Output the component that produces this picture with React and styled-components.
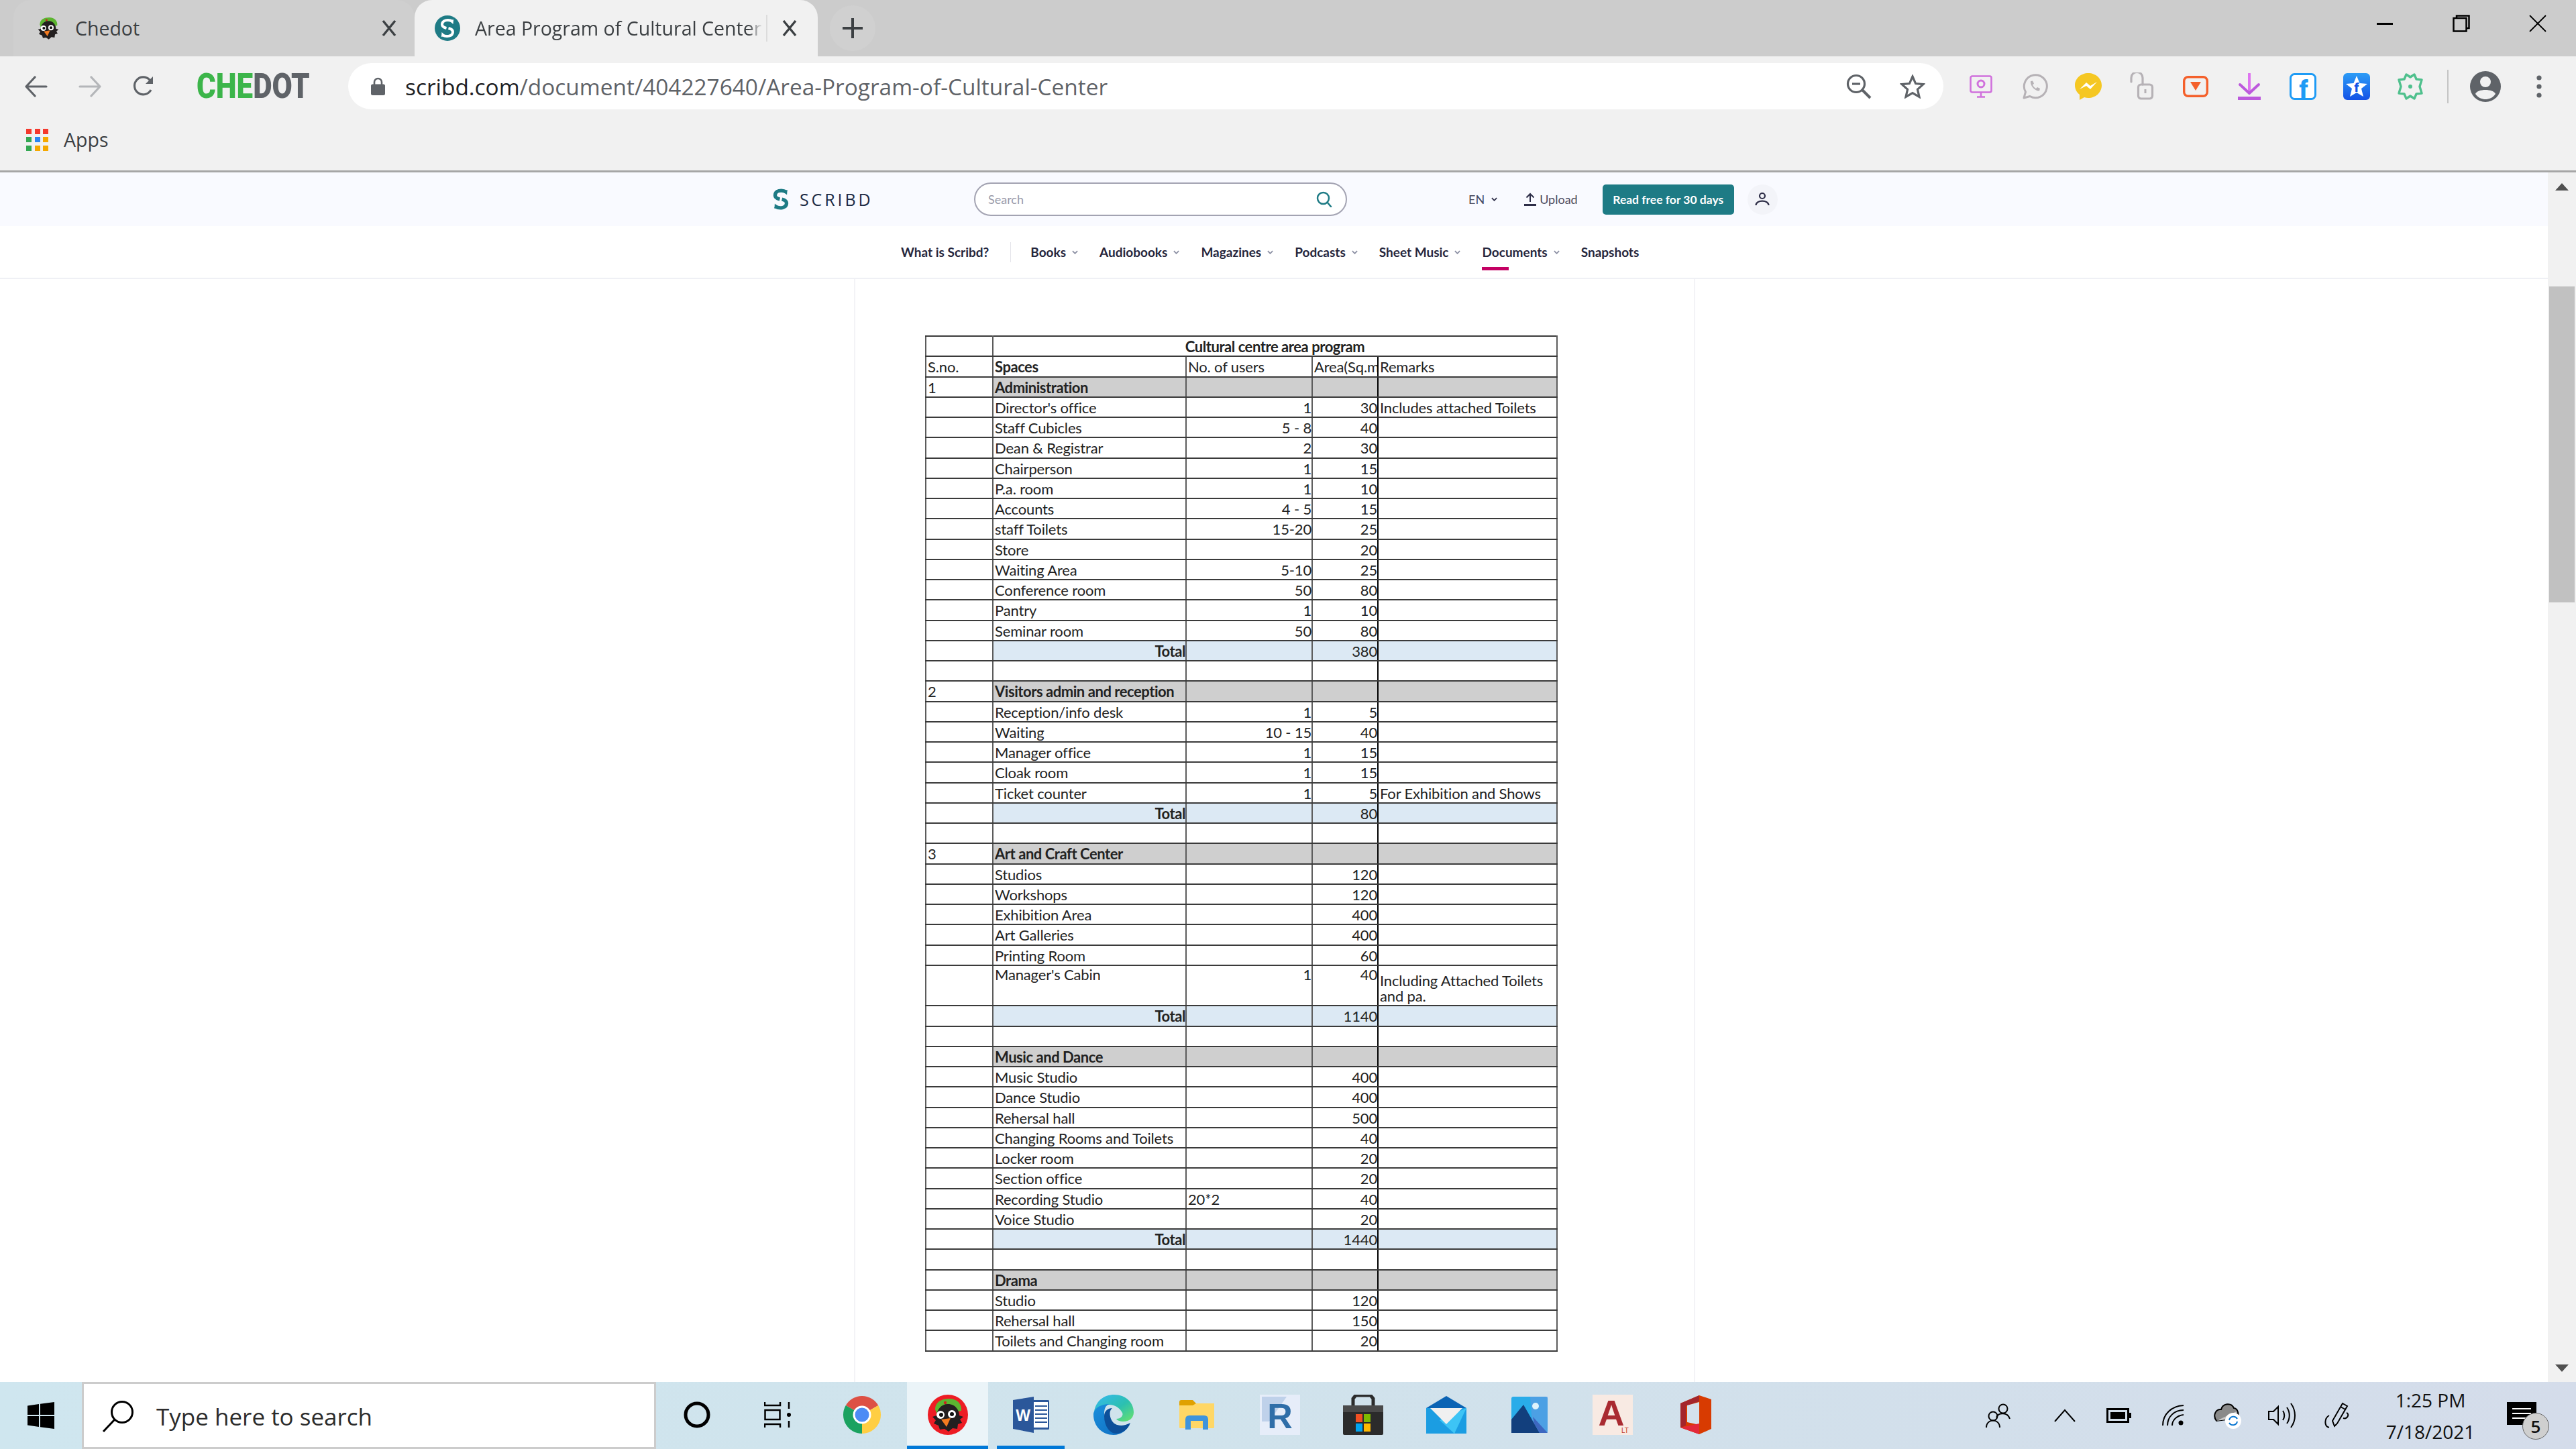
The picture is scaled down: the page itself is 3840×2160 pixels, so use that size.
import React from 'react';
import styled, { createGlobalStyle } from 'styled-components';

const GlobalStyle = createGlobalStyle`
  html, body {
    margin: 0;
    width: 3840px;
    height: 2160px;
    overflow: hidden;
    background: #fff;
  }
  * { box-sizing: border-box; }
`;

const UI_FONT = '"Open Sans", "Liberation Sans", sans-serif';
const SHEET_FONT = 'Lato, "Liberation Sans", sans-serif';

const Screen = styled.div`
  width: 3840px;
  height: 2160px;
  display: flex;
  flex-direction: column;
  font-family: ${UI_FONT};
`;

/* browser chrome */
const TabStrip = styled.div`
  height: 84px;
  flex: none;
  display: flex;
  align-items: stretch;
  padding-left: 20px;
  background: #cccccc;
`;

const Tab = styled.div`
  width: ${({ $active }) => ($active ? '601px' : '598px')};
  display: flex;
  align-items: center;
  gap: ${({ $active }) => ($active ? '22px' : '20px')};
  padding: 0 ${({ $active }) => ($active ? '31px' : '27px')} 0 ${({ $active }) => ($active ? '30px' : '32px')};
  border-radius: 26px 26px 0 0;
  background: ${({ $active }) => ($active ? '#f1f1f1' : '#cfcfcf')};
  color: #3c4043;
  font-size: 28.5px;
`;

const TabTitle = styled.span`
  flex: 1;
  overflow: hidden;
  white-space: nowrap;
`;

const FadedTitle = styled(TabTitle)`
  -webkit-mask-image: linear-gradient(90deg, #000 95%, transparent 100%);
`;

const TabSplit = styled.div`
  width: 2px;
  height: 40px;
  margin: 0 0 0 -17px;
  flex: none;
  background: #dcdcdc;
`;

const NewTab = styled.div`
  width: 68px;
  height: 68px;
  margin: 8px 0 0 18px;
  border-radius: 50%;
  background: #d0d0d0;
  display: flex;
  align-items: center;
  justify-content: center;
`;

const WindowControls = styled.div`
  margin-left: auto;
  display: flex;
`;

const WindowButton = styled.div`
  width: 114px;
  height: 70px;
  display: flex;
  align-items: center;
  justify-content: center;
`;

const Toolbar = styled.div`
  height: 89px;
  flex: none;
  display: flex;
  align-items: center;
  padding-left: 14px;
  background: #f1f1f1;
`;

const ToolButton = styled.div`
  width: 80px;
  height: 60px;
  flex: none;
  display: flex;
  align-items: center;
  justify-content: center;
`;

const BrandMark = styled.div`
  width: 164px;
  margin: 0 62px 0 39px;
  flex: none;
  font-family: Roboto, "Liberation Sans", sans-serif;
  font-weight: 900;
  font-size: 51px;
  line-height: 60px;
  white-space: nowrap;
  transform: scaleX(0.86);
  transform-origin: left center;
  color: #5f6368;
  span { color: #3cb54a; }
`;

const AddressBar = styled.div`
  width: 2378px;
  height: 69px;
  flex: none;
  display: flex;
  align-items: center;
  padding: 0 6px 0 34px;
  border-radius: 35px;
  background: #fff;
  font-size: 33.4px;
  color: #5f6368;
  margin-right: 16px;
`;

const Url = styled.div`
  flex: 1;
  margin-left: 30px;
  white-space: nowrap;
  b { font-weight: 400; color: #202124; }
`;

const Divider = styled.div`
  width: 2px;
  height: 50px;
  margin: 0 15px;
  flex: none;
  background: #c4c4c4;
`;

const Bookmarks = styled.div`
  height: 81px;
  flex: none;
  display: flex;
  align-items: center;
  gap: 23px;
  padding: 0 0 11px 39px;
  background: #f1f1f1;
  color: #3c4043;
  font-size: 28.5px;
`;

const AppsGrid = styled.div`
  width: 33px;
  display: grid;
  grid-template-columns: repeat(3, 8px);
  grid-auto-rows: 8px;
  gap: 4.5px;
`;

const AppsDot = styled.i`
  background: ${({ $c }) => $c};
`;

const ChromeEdge = styled.div`
  height: 3px;
  flex: none;
  background: #a6a6a6;
`;

/* page */
const Viewport = styled.div`
  flex: 1;
  min-height: 0;
  display: flex;
`;

const Page = styled.div`
  flex: 1;
  min-width: 0;
  display: flex;
  flex-direction: column;
  background: #fff;
`;

const SiteHeader = styled.header`
  height: 80px;
  flex: none;
  display: flex;
  align-items: center;
  padding-left: 1151px;
  background: #f9faff;
`;

const SiteLogo = styled.div`
  width: 301px;
  display: flex;
  align-items: center;
  gap: 15px;
  font-family: "Open Sans", sans-serif;
  font-size: 25px;
  letter-spacing: 3.9px;
  color: #1c2a44;
`;

const SearchBox = styled.div`
  width: 556px;
  height: 50px;
  display: flex;
  align-items: center;
  justify-content: space-between;
  padding: 0 20px 0 19px;
  border: 2px solid #a3a3b2;
  border-radius: 25px;
  background: #fff;
  font-family: ${SHEET_FONT};
  font-size: 18px;
  color: #9a9aa8;
`;

const HeaderText = styled.div`
  display: flex;
  align-items: center;
  gap: ${({ $gap }) => $gap}px;
  margin-left: ${({ $ml }) => $ml}px;
  font-family: ${SHEET_FONT};
  font-size: 18px;
  color: #4b4b60;
`;

const ReadButton = styled.div`
  width: 196px;
  height: 45px;
  margin-left: 37px;
  display: flex;
  align-items: center;
  justify-content: center;
  border-radius: 5px;
  background: #1e7b85;
  color: #fff;
  font-family: ${SHEET_FONT};
  font-weight: 700;
  font-size: 17.5px;
  white-space: nowrap;
`;

const PersonCircle = styled.div`
  width: 45px;
  height: 45px;
  margin-left: 20px;
  display: flex;
  align-items: center;
  justify-content: center;
  border-radius: 50%;
  background: #f3f4f9;
`;

const SiteNav = styled.nav`
  height: 79px;
  flex: none;
  display: flex;
  align-items: center;
  padding: 0 0 0 1343px;
  border-bottom: 2px solid #eff0f5;
  font-family: ${SHEET_FONT};
  font-size: 19px;
  line-height: 23px;
  font-weight: 700;
  color: #26263c;
`;

const NavItem = styled.div`
  position: relative;
  display: flex;
  align-items: center;
  gap: 9px;
  margin-right: 32px;
  white-space: nowrap;
  ${({ $active }) => $active && `
    &::after {
      content: '';
      position: absolute;
      left: 0;
      top: 34px;
      width: 40px;
      height: 5px;
      background: #c40063;
    }
  `}
`;

const NavSplit = styled.div`
  width: 1px;
  height: 30px;
  margin-right: 29px;
  background: #e3e3ea;
`;

const DocArea = styled.main`
  flex: 1;
  min-height: 0;
  display: flex;
  justify-content: center;
  padding-left: 2px;
`;

const DocPage = styled.div`
  width: 1254px;
  padding: 84px 0 0 104px;
  border-left: 2px solid #f3f3f6;
  border-right: 2px solid #f3f3f6;
  overflow: hidden;
`;

const Sheet = styled.table`
  width: 941px;
  table-layout: fixed;
  border-collapse: collapse;
  font-family: ${SHEET_FONT};
  font-size: 22px;
  letter-spacing: -0.16px;
  color: #222;
`;

const Row = styled.tr`
  height: ${({ $tall }) => ($tall ? '60.5px' : '30.25px')};
`;

const rowFill = { section: '#cfcfcf', total: '#dce9f4' };

const Cell = styled.td`
  padding: 1px ${({ $align }) => ($align === 'right' ? 0 : 2)}px 0 2px;
  overflow: hidden;
  white-space: nowrap;
  line-height: 23px;
  border: solid #3a3a3a;
  border-width: 2.5px 2px;
  border-left-color: #5c5c5c;
  border-right-color: #5c5c5c;
  vertical-align: ${({ $valign }) => $valign || 'middle'};
  text-align: ${({ $align }) => $align || 'left'};
  background: ${({ $fill }) => rowFill[$fill] || '#fff'};
  ${({ $bold }) => $bold && 'font-weight: 700; letter-spacing: -0.45px;'}
  ${({ $wrap }) => $wrap && 'white-space: normal; padding-bottom: 2px;'}
  ${({ $strong }) => $strong && 'border-left-color: #000;'}
  ${({ $strongRight }) => $strongRight && 'border-right-color: #000;'}
`;

/* scrollbar */
const ScrollTrack = styled.div`
  width: 42px;
  flex: none;
  display: flex;
  flex-direction: column;
  align-items: center;
  background: #f1f1f1;
`;

const ScrollArrow = styled.div`
  width: 0;
  height: 0;
  border-left: 10px solid transparent;
  border-right: 10px solid transparent;
  ${({ $down }) => ($down
    ? 'border-top: 11px solid #505050; margin-top: auto; margin-bottom: 15px;'
    : 'border-bottom: 11px solid #505050; margin-top: 16px;')}
`;

const ScrollThumb = styled.div`
  width: 38px;
  height: 471px;
  margin-top: 143px;
  background: #c1c1c1;
`;

/* taskbar */
const Taskbar = styled.footer`
  height: 100px;
  flex: none;
  display: flex;
  align-items: center;
  background: linear-gradient(90deg, #cfe6ef 0%, #d0e3ec 45%, #d4dcea 100%);
`;

const StartButton = styled.div`
  width: 122px;
  height: 100%;
  display: flex;
  align-items: center;
  justify-content: center;
`;

const TaskSearch = styled.div`
  width: 856px;
  height: 100%;
  display: flex;
  align-items: center;
  gap: 33px;
  padding: 2px 0 0 27px;
  border: 3px solid #cccccc;
  background: #fff;
  color: #2c2c2c;
  font-size: 35px;
`;

const TaskIcon = styled.div`
  position: relative;
  width: ${({ $w }) => $w || 124}px;
  height: 100%;
  flex: none;
  display: flex;
  align-items: center;
  justify-content: center;
  padding-bottom: 2px;
  margin: 0 ${({ $mr }) => $mr || 0}px 0 ${({ $ml }) => $ml || 0}px;
  background: ${({ $open }) => ($open ? '#ebf4f8' : 'transparent')};
  ${({ $bar }) => $bar && `
    &::after {
      content: '';
      position: absolute;
      left: 0;
      right: 0;
      bottom: 0;
      height: 5px;
      background: #0078d7;
    }
  `}
`;

const Tray = styled.div`
  margin-left: auto;
  height: 100%;
  display: flex;
  align-items: center;
`;

const TrayItem = styled.div`
  width: 81px;
  margin-right: ${({ $mr }) => $mr || 0}px;
  display: flex;
  align-items: center;
  justify-content: center;
`;

const Clock = styled.div`
  width: 188px;
  margin: 2px 0 0 6px;
  text-align: center;
  font-size: 28px;
  line-height: 47px;
  color: #111;
`;

const Notify = styled.div`
  position: relative;
  width: 44px;
  height: 34px;
  margin: -6px 59px 0 20px;
  background: #000;
  display: flex;
  flex-direction: column;
  justify-content: center;
  gap: 5px;
  padding: 0 8px;
  i { height: 2px; background: #fff; display: block; }
`;

const NotifyBadge = styled.div`
  position: absolute;
  right: -19px;
  top: 16px;
  width: 40px;
  height: 40px;
  border-radius: 50%;
  border: 1.5px solid #666;
  background: #cfcfcf;
  display: flex;
  align-items: center;
  justify-content: center;
  font-size: 26px;
  font-weight: 600;
  color: #111;
`;

/* drawings */
const ChedotBird = ({ size, ring }) => (
  <svg width={size} height={size} viewBox="0 0 60 60">
    {ring && <circle cx="30" cy="30" r="30" fill="#ed1c24" />}
    <path d="M11 22 C11 10 22 6 32 6 C44 6 51 14 50 24 L34 27 L14 30 Z" fill="#5cb531" />
    <circle cx="26" cy="12" r="2.2" fill="#d02020" />
    <path d="M30 14 C42 14 47 24 47 31 L53 33 L48 37 L51 42 L45 44 L44 51 L37 50 L31 55 L25 51 L18 52 L16 46 L9 43 L12 38 L7 33 L13 31 C14 22 20 14 30 14 Z" fill="#231f20" />
    <circle cx="19" cy="30" r="6" fill="#fff" />
    <circle cx="36" cy="29" r="6" fill="#fff" />
    <circle cx="20" cy="30" r="3" fill="#111" />
    <circle cx="36" cy="29" r="3" fill="#111" />
    <path d="M20 37 L34 35 L28 48 Z" fill="#f47b20" />
  </svg>
);

const ScribdStrokes = ({ color, sw }) => (
  <g fill="none" stroke={color} strokeWidth={sw} strokeLinecap="butt">
    <path d="M20 5 C13 1 4 3 4 9.5 C4 12.5 6.5 14 10.5 15" />
    <path d="M13.5 15 C17.5 16 20 17.5 20 20.5 C20 27 11 29 4 25" />
    <path d="M15 4 L21 2 L20.5 9" fill={color} stroke="none" />
    <path d="M9 26 L3 28 L3.5 21" fill={color} stroke="none" />
  </g>
);

const ScribdMark = () => (
  <svg width="26" height="32" viewBox="0 0 24 30"><ScribdStrokes color="#1e7b85" sw={5} /></svg>
);

const ScribdRound = () => (
  <svg width="38" height="38" viewBox="0 0 38 38">
    <circle cx="19" cy="19" r="19" fill="#1e7b85" />
    <g transform="translate(7 4)"><ScribdStrokes color="#fff" sw={4} /></g>
  </svg>
);

const CloseX = () => (
  <svg width="22" height="26" viewBox="0 0 22 26" stroke="#3c4043" strokeWidth="3.4">
    <path d="M2 2 L20 24 M20 2 L2 24" />
  </svg>
);

const Plus = () => (
  <svg width="34" height="34" viewBox="0 0 34 34" stroke="#3c4043" strokeWidth="4"><path d="M17 2 V32 M2 17 H32" /></svg>
);

const Arrow = ({ flip, color }) => (
  <svg width="34" height="32" viewBox="0 0 34 32" fill="none" stroke={color} strokeWidth="3.2" strokeLinecap="round" strokeLinejoin="round">
    <g transform={flip ? 'translate(34 0) scale(-1 1)' : undefined}>
      <path d="M32 16 H3 M15 2 L2 16 L15 30" />
    </g>
  </svg>
);

const Reload = () => (
  <svg width="34" height="34" viewBox="0 0 34 34" fill="none" stroke="#5f6368" strokeWidth="3.2">
    <path d="M28 22 A13 13 0 1 1 26 7 L30 11" />
    <path d="M31 2 L31 13 L20 13 Z" fill="#5f6368" stroke="none" />
  </svg>
);

const Lock = () => (
  <svg width="21" height="27" viewBox="0 0 21 27">
    <path d="M5 12 V7.5 a5.5 5.5 0 0 1 11 0 V12" fill="none" stroke="#5f6368" strokeWidth="2.6" />
    <rect x="0" y="10.5" width="21" height="16.5" rx="2.5" fill="#5f6368" />
  </svg>
);

const ZoomOut = () => (
  <svg width="38" height="38" viewBox="0 0 38 38" fill="none" stroke="#5f6368" strokeWidth="3.2">
    <circle cx="15" cy="15" r="12.5" />
    <path d="M24 24 L36 36" strokeWidth="4" />
    <path d="M9 15 H21" />
  </svg>
);

const Star = () => (
  <svg width="38" height="36" viewBox="0 0 38 36" fill="none" stroke="#5f6368" strokeWidth="3.2">
    <path d="M19 3 L23.6 13.6 L35 14.6 L26.4 22.2 L29 33.4 L19 27.5 L9 33.4 L11.6 22.2 L3 14.6 L14.4 13.6 Z" />
  </svg>
);

const ExtScreen = () => (
  <svg width="34" height="34" viewBox="0 0 34 34" fill="none" stroke="#d071dc" strokeWidth="2.6">
    <rect x="1.5" y="1.5" width="31" height="24" rx="2.5" />
    <circle cx="17" cy="13" r="5" strokeWidth="3" />
    <path d="M17 26 V32 M11 32.5 H23" />
  </svg>
);

const ExtWhatsapp = () => (
  <svg width="40" height="40" viewBox="0 0 40 40" fill="none" stroke="#b6b2b6" strokeWidth="3">
    <path d="M4 37 L6.5 28 A17 17 0 1 1 13 34.5 Z" strokeLinejoin="round" />
    <path d="M14 12 C13 18 20 27 27 26.5 L28 23 L24 21 L22 23 C20 22 18 20 17 17.5 L19 15.5 L17 11.5 Z" fill="#b6b2b6" stroke="none" />
  </svg>
);

const ExtMessenger = () => (
  <svg width="40" height="40" viewBox="0 0 40 40">
    <path d="M20 0 C9 0 0 8 0 18 C0 24 3 29 7 32 V40 L14 36 C16 36.5 18 37 20 37 C31 37 40 29 40 18 C40 8 31 0 20 0 Z" fill="#f5c722" />
    <path d="M7 24 L17 14 L23 19 L33 13 L23 24 L17 19 Z" fill="#fff" />
  </svg>
);

const ExtLock = () => (
  <svg width="36" height="42" viewBox="0 0 36 42" fill="none" stroke="#b6b2b6" strokeWidth="3.2">
    <path d="M2 14 V8 a8.5 8.5 0 0 1 17 0 V18" strokeLinecap="round" />
    <rect x="12.5" y="18" width="21" height="21" rx="4" />
    <path d="M23 25 V31" strokeWidth="3" />
  </svg>
);

const ExtVideo = () => (
  <svg width="38" height="32" viewBox="0 0 38 32" fill="none">
    <rect x="1.7" y="1.7" width="34.6" height="28.6" rx="6" stroke="#f4602b" strokeWidth="3.4" />
    <path d="M11 9 H27 L19 22 Z" fill="#f4602b" />
  </svg>
);

const ExtDownload = () => (
  <svg width="36" height="40" viewBox="0 0 36 40" fill="none" strokeWidth="4" strokeLinecap="round">
    <path d="M18 1 V28" stroke="#de74f0" />
    <path d="M4 17 L18 30 L32 17" stroke="#bc59dc" strokeLinejoin="round" />
    <rect x="1" y="35" width="34" height="5" fill="#bc59dc" stroke="none" />
  </svg>
);

const ExtFacebook = () => (
  <svg width="40" height="40" viewBox="0 0 40 40">
    <rect x="1.5" y="1.5" width="37" height="37" rx="6" fill="#fff" stroke="#1e9bf5" strokeWidth="3" />
    <text x="21" y="37" textAnchor="middle" fontFamily="Roboto, sans-serif" fontWeight="900" fontSize="36" fill="#1e9bf5">f</text>
  </svg>
);

const ExtFbStar = () => (
  <svg width="40" height="40" viewBox="0 0 40 40">
    <defs>
      <linearGradient id="fbstar" x1="0" y1="0" x2="0" y2="1">
        <stop offset="0" stopColor="#2c9cf6" />
        <stop offset="1" stopColor="#1452e6" />
      </linearGradient>
    </defs>
    <rect width="40" height="40" rx="6" fill="url(#fbstar)" />
    <path d="M20 4 L24.5 15 L36 16 L27 23 L30 35 L20 29 L10 35 L13 23 L4 16 L15.5 15 Z" fill="#fff" />
    <text x="20" y="28" textAnchor="middle" fontFamily="Roboto, sans-serif" fontWeight="900" fontSize="19" fill="#1452e6">f</text>
  </svg>
);

const ExtGear = () => (
  <svg width="40" height="40" viewBox="0 0 40 40" fill="none" stroke="#4fc08d" strokeWidth="3.4" strokeLinejoin="round">
    <path d="M14 2 L20 6 L26 2 L29 9 L37 10 L34 20 L37 30 L29 31 L26 38 L20 34 L14 38 L11 31 L3 30 L6 20 L3 10 L11 9 Z" />
    <circle cx="20" cy="20" r="3" fill="#4fc08d" stroke="none" />
  </svg>
);

const Avatar = () => (
  <svg width="46" height="46" viewBox="0 0 46 46">
    <circle cx="23" cy="23" r="23" fill="#5f6368" />
    <circle cx="23" cy="16" r="8" fill="#f1f1f1" />
    <path d="M8 34 C11 26 35 26 38 34 C34 40 28 42 23 42 C18 42 12 40 8 34 Z" fill="#f1f1f1" />
  </svg>
);

const KebabDots = () => (
  <svg width="8" height="34" viewBox="0 0 8 34" fill="#5f6368">
    <circle cx="4" cy="4" r="3.6" /><circle cx="4" cy="17" r="3.6" /><circle cx="4" cy="30" r="3.6" />
  </svg>
);

const SearchGlass = () => (
  <svg width="24" height="24" viewBox="0 0 24 24" fill="none" stroke="#1e7b85" strokeWidth="2.5">
    <circle cx="10.5" cy="10.5" r="8.5" />
    <path d="M16.5 16.5 L22 23" strokeLinecap="round" />
  </svg>
);

const TinyCaret = ({ color = '#8b8fa3' }) => (
  <svg width="9" height="6" viewBox="0 0 10 6" fill="none" stroke={color} strokeWidth="2">
    <path d="M1 1 L5 5 L9 1" />
  </svg>
);

const UploadIcon = () => (
  <svg width="18" height="20" viewBox="0 0 18 20" fill="none" stroke="#2e2e48" strokeWidth="2">
    <path d="M9 14 V2 M3.5 7.5 L9 2 L14.5 7.5" />
    <path d="M0 18.5 H18" strokeWidth="3" />
  </svg>
);

const PersonIcon = () => (
  <svg width="22" height="22" viewBox="0 0 22 22" fill="none" stroke="#2e2e48" strokeWidth="2.2">
    <circle cx="11" cy="6" r="4" />
    <path d="M1.5 20 C1.5 11.5 20.5 11.5 20.5 20" />
  </svg>
);

const WinLogo = () => (
  <svg width="40" height="40" viewBox="0 0 40 40" fill="#000">
    <path d="M0 5.5 L17 3 V19 H0 Z M19 2.7 L40 0 V19 H19 Z M0 21 H17 V37 L0 34.5 Z M19 21 H40 V40 L19 37.3 Z" />
  </svg>
);

const TaskSearchGlass = () => (
  <svg width="48" height="48" viewBox="0 0 48 48" fill="none" stroke="#000" strokeWidth="3">
    <circle cx="30" cy="18" r="15.5" />
    <path d="M19 29 L2 47" />
  </svg>
);

const Cortana = () => (
  <svg width="40" height="40" viewBox="0 0 40 40" fill="none">
    <circle cx="20" cy="20" r="17" stroke="#000" strokeWidth="5" />
  </svg>
);

const TaskView = () => (
  <svg width="40" height="40" viewBox="0 0 40 40" fill="none" stroke="#000" strokeWidth="2.5">
    <path d="M1 1 V6 H24 V1 M1 39 V34 H24 V39" />
    <rect x="1.5" y="13" width="22" height="14" />
    <path d="M37 1 V11 M37 29 V39" />
    <circle cx="37" cy="20" r="3" fill="#000" stroke="none" />
  </svg>
);

const ChromeIcon = () => (
  <svg width="56" height="56" viewBox="0 0 56 56">
    <path d="M28 28 L52.25 14 A28 28 0 0 0 3.75 14 Z" fill="#dd5044" />
    <path d="M28 28 L3.75 14 A28 28 0 0 0 28 56 Z" fill="#1aa260" />
    <path d="M28 28 L28 56 A28 28 0 0 0 52.25 14 Z" fill="#ffce43" />
    <circle cx="28" cy="28" r="13.5" fill="#fff" />
    <circle cx="28" cy="28" r="10.5" fill="#4c8bf5" />
  </svg>
);

const WordIcon = () => (
  <svg width="54" height="54" viewBox="0 0 54 54">
    <rect x="24" y="5" width="30" height="44" rx="1.5" fill="#2b579a" />
    <rect x="31" y="8" width="21" height="38" fill="#fff" />
    <path d="M33 14 H51 M33 20 H51 M33 26 H51 M33 32 H51 M33 38 H51" stroke="#2b579a" strokeWidth="2.2" />
    <path d="M0 5 L31 0 V54 L0 48 Z" fill="#2b579a" />
    <text x="15" y="36" textAnchor="middle" fontFamily='"Liberation Sans", sans-serif' fontWeight="700" fontSize="23" fill="#fff">W</text>
  </svg>
);

const EdgeIcon = () => (
  <svg width="60" height="60" viewBox="0 0 60 60">
    <defs>
      <linearGradient id="edgeTop" x1="0" y1="0" x2="1" y2="1">
        <stop offset="0" stopColor="#35b8f1" />
        <stop offset="0.55" stopColor="#2cc0b0" />
        <stop offset="1" stopColor="#6be36a" />
      </linearGradient>
      <linearGradient id="edgeLow" x1="0" y1="0" x2="1" y2="1">
        <stop offset="0" stopColor="#1a8fdc" />
        <stop offset="1" stopColor="#0f6cc0" />
      </linearGradient>
    </defs>
    <path d="M1 26 C3 10 15 0 31 0 C48 0 60 12 60 26 C60 35 53 40 45 40 C39 40 35 38 34 36 C41 36 45 31 43 27 C39 19 31 15 24 15 C12 15 3 20 1 26 Z" fill="url(#edgeTop)" />
    <path d="M0 30 C0 21 10 14 24 14 C14 17 16 30 17 36 C19 48 30 54 40 52 C47 51 53 47 55 42 C51 53 41 60 30 60 C13 60 0 47 0 30 Z" fill="url(#edgeLow)" />
    <path d="M16 32 C16 24 22 20 28 20 C23 24 24 32 27 38 C31 46 42 49 55 42 C51 53 41 58 34 58 C24 58 16 46 16 32 Z" fill="#0c4f9a" />
  </svg>
);

const FolderIcon = () => (
  <svg width="52" height="44" viewBox="0 0 52 44">
    <path d="M0 3 Q0 0 3 0 H20 L25 5 H52 V12 H0 Z" fill="#e0a100" />
    <path d="M0 8 H20 L25 5 H52 V41 Q52 42 50 42 H2 Q0 42 0 41 Z" fill="#ffd766" />
    <path d="M9 44 V29 Q9 23 15 23 H37 Q43 23 43 29 V44 H35 V31 H17 V44 Z" fill="#3e94dc" />
  </svg>
);

const RevitIcon = () => (
  <svg width="60" height="60" viewBox="0 0 60 60">
    <rect width="60" height="60" fill="#e6edf9" />
    <path d="M3 3 H40 L14 40 H3 Z" fill="#bfd1ea" />
    <text x="30" y="50" textAnchor="middle" fontFamily='"Liberation Sans", sans-serif' fontWeight="700" fontSize="52" fill="#2f6ea8">R</text>
  </svg>
);

const StoreIcon = () => (
  <svg width="60" height="60" viewBox="0 0 60 60">
    <path d="M15 20 V6 L19 1 H41 L45 6 V20" fill="none" stroke="#2c2c2c" strokeWidth="5" />
    <path d="M0 16 H60 V58 Q60 60 58 60 H2 Q0 60 0 58 Z" fill="#2b2b2b" />
    <rect x="0" y="16" width="60" height="10" fill="#4a4a4a" />
    <rect x="19" y="29" width="10" height="12" fill="#f25022" />
    <rect x="31" y="29" width="10" height="12" fill="#7fba00" />
    <rect x="19" y="43" width="10" height="12" fill="#00a4ef" />
    <rect x="31" y="43" width="10" height="12" fill="#ffb900" />
  </svg>
);

const MailIcon = () => (
  <svg width="60" height="56" viewBox="0 0 60 56">
    <path d="M0 18 L30 0 L60 18 Z" fill="#0a63b4" />
    <path d="M0 18 H60 V56 H0 Z" fill="#1b9de2" />
    <path d="M60 18 L42 56 L20 36 Z" fill="#3dc4f5" />
    <path d="M6 18 H54 L30 42 Z" fill="#f0f0f0" />
  </svg>
);

const PhotosIcon = () => (
  <svg width="54" height="54" viewBox="0 0 54 54">
    <rect width="54" height="54" rx="3" fill="#29ace9" />
    <path d="M28 0 H54 V54 H32 Z" fill="#6f93e0" opacity="0.5" />
    <circle cx="36" cy="14" r="5" fill="#dff2fb" />
    <path d="M0 34 L18 12 L42 54 H0 Z" fill="#123f7d" />
    <path d="M32 30 L54 54 H42 L34 40 Z" fill="#3d67c0" />
  </svg>
);

const AcadIcon = () => (
  <svg width="60" height="60" viewBox="0 0 60 60">
    <rect width="60" height="60" fill="#f8eae3" />
    <text x="28" y="46" textAnchor="middle" fontFamily='"Liberation Sans", sans-serif' fontWeight="700" fontSize="54" fill="#a92a31">A</text>
    <text x="43" y="57" fontFamily='"Liberation Sans", sans-serif' fontSize="10" fill="#c0392b">LT</text>
  </svg>
);

const OfficeIcon = () => (
  <svg width="46" height="58" viewBox="0 0 46 58" fill="none">
    <path d="M28 0 L46 6 V50 L28 58 L0 48 V12 Z" fill="#d83b01" />
    <path d="M28 0 L0 12 V48 L8 45 V16 L28 9 Z" fill="#a4262c" />
    <path d="M10 15 L28 10 V44 L10 40 Z" fill="#d4e1ec" />
    <path d="M0 48 L28 42 V58 Z" fill="#e3293a" />
  </svg>
);

const PeopleIcon = () => (
  <svg width="38" height="38" viewBox="0 0 38 38" fill="none" stroke="#000" strokeWidth="2">
    <circle cx="26" cy="9" r="6.5" />
    <path d="M16 22 C19 14 33 14 36 24" />
    <circle cx="11" cy="20" r="6.5" />
    <path d="M1 37 C1 23 21 23 21 37" />
  </svg>
);

const TrayCaret = () => (
  <svg width="32" height="20" viewBox="0 0 32 20" fill="none" stroke="#000" strokeWidth="2"><path d="M1 19 L16 2 L31 19" /></svg>
);

const Battery = () => (
  <svg width="38" height="22" viewBox="0 0 38 22">
    <rect x="1.5" y="1.5" width="31" height="19" fill="none" stroke="#000" strokeWidth="3" />
    <rect x="6" y="6" width="22" height="10" fill="#000" />
    <rect x="34" y="7" width="3" height="8" fill="#000" />
  </svg>
);

const Wifi = () => (
  <svg width="34" height="32" viewBox="0 0 34 32" fill="none" stroke="#000" strokeWidth="2">
    <path d="M1 31 C1 14 14 2 32 1" />
    <path d="M8 31 C8 18 18 8 32 8" />
    <path d="M15 31 C15 23 22 16 32 15" />
    <circle cx="28" cy="27" r="3.5" fill="#000" stroke="none" />
  </svg>
);

const OneDriveSync = () => (
  <svg width="42" height="40" viewBox="0 0 42 40">
    <path d="M4 28 C-2 20 3 10 11 11 C13 2 26 0 30 9 C37 10 38 20 34 24 Z" fill="#8a8a8a" stroke="#000" strokeWidth="2" />
    <path d="M4 28 L34 14 L34 24 Z" fill="#c9c9c9" />
    <circle cx="29" cy="28" r="12" fill="#fff" />
    <path d="M23 27 A6.5 6.5 0 0 1 35 25 M35 29 A6.5 6.5 0 0 1 23 31" fill="none" stroke="#0d78d1" strokeWidth="2" />
  </svg>
);

const Volume = () => (
  <svg width="42" height="38" viewBox="0 0 42 38" fill="none" stroke="#000" strokeWidth="2">
    <path d="M1 13 H8 L15 6 V32 L8 25 H1 Z" />
    <path d="M22 12 C25 16 25 22 22 26" />
    <path d="M28 7 C33 14 33 24 28 31" />
    <path d="M34 1 C42 12 42 26 34 37" />
  </svg>
);

const PenIcon = () => (
  <svg width="40" height="40" viewBox="0 0 40 40" fill="none" stroke="#000" strokeWidth="2">
    <path d="M17 36 L14 28 L29 2 L36 6 L21 32 Z" />
    <path d="M26 7 L33 11" />
    <path d="M9 20 C2 24 1 36 9 38 M30 24 C36 26 40 18 35 16" />
  </svg>
);

const appsColors = ['#f4392d', '#f4392d', '#f4392d', '#34a853', '#2a86f3', '#f5a800', '#34a853', '#f5a800', '#f5a800'];

const extensions = [
  <ExtScreen key="screen" />,
  <ExtWhatsapp key="whatsapp" />,
  <ExtMessenger key="messenger" />,
  <ExtLock key="lock" />,
  <ExtVideo key="video" />,
  <ExtDownload key="download" />,
  <ExtFacebook key="facebook" />,
  <ExtFbStar key="fbstar" />,
  <ExtGear key="gear" />,
];

const navLinks = [
  { label: 'Books', caret: true },
  { label: 'Audiobooks', caret: true },
  { label: 'Magazines', caret: true },
  { label: 'Podcasts', caret: true },
  { label: 'Sheet Music', caret: true },
  { label: 'Documents', caret: true, active: true },
  { label: 'Snapshots' },
];

/* kind: section | total | blank | tall; anything else is a plain line */
const sheetRows = [
  { kind: 'section', no: '1', name: 'Administration' },
  { name: "Director's office", users: '1', area: '30', remark: 'Includes attached Toilets' },
  { name: 'Staff Cubicles', users: '5 - 8', area: '40' },
  { name: 'Dean & Registrar', users: '2', area: '30' },
  { name: 'Chairperson', users: '1', area: '15' },
  { name: 'P.a. room', users: '1', area: '10' },
  { name: 'Accounts', users: '4 - 5', area: '15' },
  { name: 'staff Toilets', users: '15-20', area: '25' },
  { name: 'Store', area: '20' },
  { name: 'Waiting Area', users: '5-10', area: '25' },
  { name: 'Conference room', users: '50', area: '80' },
  { name: 'Pantry', users: '1', area: '10' },
  { name: 'Seminar room', users: '50', area: '80' },
  { kind: 'total', area: '380' },
  { kind: 'blank' },
  { kind: 'section', no: '2', name: 'Visitors admin and reception' },
  { name: 'Reception/info desk', users: '1', area: '5' },
  { name: 'Waiting', users: '10 - 15', area: '40' },
  { name: 'Manager office', users: '1', area: '15' },
  { name: 'Cloak room', users: '1', area: '15' },
  { name: 'Ticket counter', users: '1', area: '5', remark: 'For Exhibition and Shows' },
  { kind: 'total', area: '80' },
  { kind: 'blank' },
  { kind: 'section', no: '3', name: 'Art and Craft Center' },
  { name: 'Studios', area: '120' },
  { name: 'Workshops', area: '120' },
  { name: 'Exhibition Area', area: '400' },
  { name: 'Art Galleries', area: '400' },
  { name: 'Printing Room', area: '60' },
  { kind: 'tall', name: "Manager's Cabin", users: '1', area: '40', remark: 'Including Attached Toilets and pa.' },
  { kind: 'total', area: '1140' },
  { kind: 'blank' },
  { kind: 'section', name: 'Music and Dance' },
  { name: 'Music Studio', area: '400' },
  { name: 'Dance Studio', area: '400' },
  { name: 'Rehersal hall', area: '500' },
  { name: 'Changing Rooms and Toilets', area: '40' },
  { name: 'Locker room', area: '20' },
  { name: 'Section office', area: '20' },
  { name: 'Recording Studio', usersLeft: '20*2', area: '40' },
  { name: 'Voice Studio', area: '20' },
  { kind: 'total', area: '1440' },
  { kind: 'blank' },
  { kind: 'section', name: 'Drama' },
  { name: 'Studio', area: '120' },
  { name: 'Rehersal hall', area: '150' },
  { name: 'Toilets and Changing room', area: '20' },
];

function SheetRow({ row }) {
  const { kind, no, name, users, usersLeft, area, remark } = row;
  const fill = kind === 'section' || kind === 'total' ? kind : undefined;
  const tall = kind === 'tall';
  const top = tall ? 'top' : undefined;
  return (
    <Row $tall={tall}>
      <Cell>{no}</Cell>
      {kind === 'total' ? (
        <Cell $fill={fill} $bold $align="right">Total</Cell>
      ) : (
        <Cell $fill={fill} $bold={kind === 'section'} $valign={top}>{name}</Cell>
      )}
      <Cell $fill={fill} $align={usersLeft ? 'left' : 'right'} $valign={top}>{users || usersLeft}</Cell>
      <Cell $fill={fill} $align="right" $valign={top} $strongRight>{area}</Cell>
      <Cell $fill={fill} $strong $wrap={tall} $valign={tall ? 'bottom' : undefined}>{remark}</Cell>
    </Row>
  );
}

export default function App() {
  return (
    <Screen>
      <GlobalStyle />
      <TabStrip>
        <Tab>
          <ChedotBird size={40} />
          <TabTitle>Chedot</TabTitle>
          <CloseX />
        </Tab>
        <Tab $active>
          <ScribdRound />
          <FadedTitle>Area Program of Cultural Center</FadedTitle>
          <TabSplit />
          <CloseX />
        </Tab>
        <NewTab><Plus /></NewTab>
        <WindowControls>
          <WindowButton>
            <svg width="24" height="3" viewBox="0 0 24 3"><rect width="24" height="3" fill="#000" /></svg>
          </WindowButton>
          <WindowButton>
            <svg width="26" height="26" viewBox="0 0 26 26" fill="none" stroke="#000" strokeWidth="2.5">
              <path d="M6 5 V1.5 H24.5 V20 H21" />
              <rect x="1.5" y="5" width="19" height="19.5" />
            </svg>
          </WindowButton>
          <WindowButton>
            <svg width="26" height="26" viewBox="0 0 26 26" stroke="#000" strokeWidth="1.8"><path d="M1 1 L25 25 M25 1 L1 25" /></svg>
          </WindowButton>
        </WindowControls>
      </TabStrip>

      <Toolbar>
        <ToolButton><Arrow color="#5f6368" /></ToolButton>
        <ToolButton><Arrow flip color="#b4b6b9" /></ToolButton>
        <ToolButton><Reload /></ToolButton>
        <BrandMark><span>CHE</span>DOT</BrandMark>
        <AddressBar>
          <Lock />
          <Url><b>scribd.com</b>/document/404227640/Area-Program-of-Cultural-Center</Url>
          <ToolButton><ZoomOut /></ToolButton>
          <ToolButton><Star /></ToolButton>
        </AddressBar>
        {extensions.map((icon) => <ToolButton key={icon.key}>{icon}</ToolButton>)}
        <Divider />
        <ToolButton><Avatar /></ToolButton>
        <ToolButton><KebabDots /></ToolButton>
      </Toolbar>

      <Bookmarks>
        <AppsGrid>
          {appsColors.map((c, i) => <AppsDot key={i} $c={c} />)}
        </AppsGrid>
        Apps
      </Bookmarks>
      <ChromeEdge />

      <Viewport>
        <Page>
          <SiteHeader>
            <SiteLogo>
              <ScribdMark />
              SCRIBD
            </SiteLogo>
            <SearchBox>
              Search
              <SearchGlass />
            </SearchBox>
            <HeaderText $ml={181} $gap={10}>EN <TinyCaret color="#2e2e48" /></HeaderText>
            <HeaderText $ml={40} $gap={5}><UploadIcon /> Upload</HeaderText>
            <ReadButton>Read free for 30 days</ReadButton>
            <PersonCircle><PersonIcon /></PersonCircle>
          </SiteHeader>
          <SiteNav>
            <NavItem>What is Scribd?</NavItem>
            <NavSplit />
            {navLinks.map((link) => (
              <NavItem key={link.label} $active={link.active}>
                {link.label}
                {link.caret && <TinyCaret />}
              </NavItem>
            ))}
          </SiteNav>
          <DocArea>
            <DocPage>
              <Sheet>
                <colgroup>
                  <col width="100" />
                  <col width="288" />
                  <col width="188" />
                  <col width="98" />
                  <col width="267" />
                </colgroup>
                <tbody>
                  <Row>
                    <Cell />
                    <Cell colSpan={4} $bold $align="center">Cultural centre area program</Cell>
                  </Row>
                  <Row>
                    <Cell>S.no.</Cell>
                    <Cell $bold>Spaces</Cell>
                    <Cell>No. of users</Cell>
                    <Cell $strongRight>Area(Sq.m)</Cell>
                    <Cell $strong>Remarks</Cell>
                  </Row>
                  {sheetRows.map((row, i) => <SheetRow key={i} row={row} />)}
                </tbody>
              </Sheet>
            </DocPage>
          </DocArea>
        </Page>
        <ScrollTrack>
          <ScrollArrow />
          <ScrollThumb />
          <ScrollArrow $down />
        </ScrollTrack>
      </Viewport>

      <Taskbar>
        <StartButton><WinLogo /></StartButton>
        <TaskSearch>
          <TaskSearchGlass />
          Type here to search
        </TaskSearch>
        <TaskIcon $w={122}><Cortana /></TaskIcon>
        <TaskIcon $w={118}><TaskView /></TaskIcon>
        <TaskIcon $w={134}><ChromeIcon /></TaskIcon>
        <TaskIcon $w={121} $open $bar><ChedotBird size={60} ring /></TaskIcon>
        <TaskIcon $w={101} $bar $ml={13} $mr={11}><WordIcon /></TaskIcon>
        <TaskIcon><EdgeIcon /></TaskIcon>
        <TaskIcon><FolderIcon /></TaskIcon>
        <TaskIcon><RevitIcon /></TaskIcon>
        <TaskIcon><StoreIcon /></TaskIcon>
        <TaskIcon><MailIcon /></TaskIcon>
        <TaskIcon><PhotosIcon /></TaskIcon>
        <TaskIcon><AcadIcon /></TaskIcon>
        <TaskIcon><OfficeIcon /></TaskIcon>
        <Tray>
          <TrayItem $mr={18}><PeopleIcon /></TrayItem>
          <TrayItem><TrayCaret /></TrayItem>
          <TrayItem><Battery /></TrayItem>
          <TrayItem><Wifi /></TrayItem>
          <TrayItem><OneDriveSync /></TrayItem>
          <TrayItem><Volume /></TrayItem>
          <TrayItem><PenIcon /></TrayItem>
          <Clock>1:25 PM<br />7/18/2021</Clock>
          <Notify>
            <i /><i /><i />
            <NotifyBadge>5</NotifyBadge>
          </Notify>
        </Tray>
      </Taskbar>
    </Screen>
  );
}
